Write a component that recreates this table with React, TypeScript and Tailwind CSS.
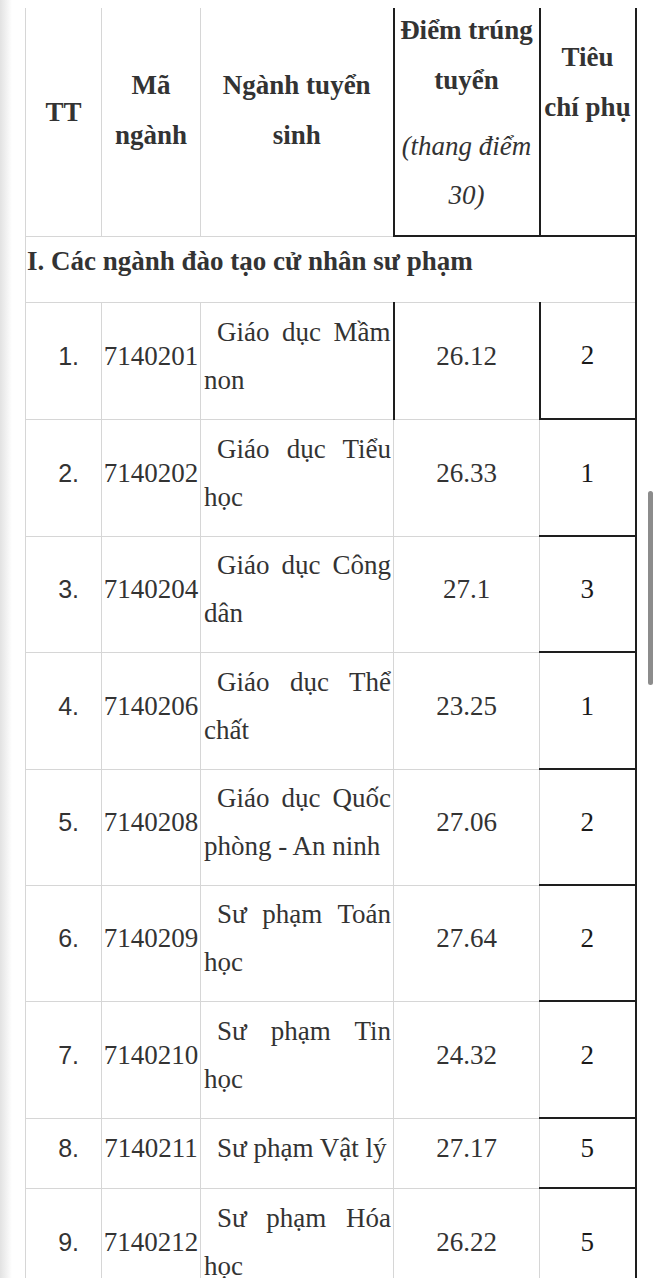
import React from "react";

type Row = {
  tt: string;
  ma: string;
  name: string;
  diem: string;
  tc: string;
  h: string;
  first?: boolean;
};

const rows: Row[] = [
  { tt: "1.", ma: "7140201", name: "Giáo dục Mầm non", diem: "26.12", tc: "2", h: "h-[117px]", first: true },
  { tt: "2.", ma: "7140202", name: "Giáo dục Tiểu học", diem: "26.33", tc: "1", h: "h-[117px]" },
  { tt: "3.", ma: "7140204", name: "Giáo dục Công dân", diem: "27.1", tc: "3", h: "h-[116px]" },
  { tt: "4.", ma: "7140206", name: "Giáo dục Thể chất", diem: "23.25", tc: "1", h: "h-[117px]" },
  { tt: "5.", ma: "7140208", name: "Giáo dục Quốc phòng - An ninh", diem: "27.06", tc: "2", h: "h-[116px]" },
  { tt: "6.", ma: "7140209", name: "Sư phạm Toán học", diem: "27.64", tc: "2", h: "h-[116px]" },
  { tt: "7.", ma: "7140210", name: "Sư phạm Tin học", diem: "24.32", tc: "2", h: "h-[117px]" },
  { tt: "8.", ma: "7140211", name: "Sư phạm Vật lý", diem: "27.17", tc: "5", h: "h-[70px]" },
  { tt: "9.", ma: "7140212", name: "Sư phạm Hóa học", diem: "26.22", tc: "5", h: "h-[117px]" },
];

const serif = "font-['Liberation_Serif','Times_New_Roman',serif]";
const sans = "font-['Liberation_Sans',Arial,sans-serif]";
const gray = "border border-[#d6d6d6]";

export default function App() {
  return (
    <div className={`relative flex h-[1278px] w-[660px] overflow-hidden bg-white ${serif} text-[#333]`}>
      <div className="w-[12px] shrink-0 bg-gradient-to-r from-[#e2e2e2] to-white" />
      <div className="ml-[13px] pt-[8px]">
        <table className="w-[610px] table-fixed border-collapse text-[27px]">
          <colgroup>
            <col className="w-[76px]" />
            <col className="w-[99px]" />
            <col className="w-[193px]" />
            <col className="w-[146px]" />
            <col className="w-[96px]" />
          </colgroup>
          <thead>
            <tr className="h-[228px] font-bold leading-[50px]">
              <th className={`${gray} border-t-0 p-0 align-top`}>
                <div className="pt-[79px] text-center">TT</div>
              </th>
              <th className={`${gray} border-t-0 p-0 align-top`}>
                <div className="pt-[52px] text-center">
                  Mã
                  <br />
                  ngành
                </div>
              </th>
              <th className={`${gray} border-t-0 p-0 align-top`}>
                <div className="pt-[52px] text-center">
                  Ngành tuyển
                  <br />
                  sinh
                </div>
              </th>
              <th className="border-2 border-t-0 border-[#1e1e1e] p-0 align-top">
                <div className="-mt-[3px] text-center">
                  <p>
                    Điểm trúng
                    <br />
                    tuyển
                  </p>
                  <p className="mt-[17px] font-normal italic leading-[49px]">
                    (thang điểm
                    <br />
                    30)
                  </p>
                </div>
              </th>
              <th className="border-2 border-t-0 border-[#1e1e1e] p-0 align-top">
                <div className="pt-[24px] text-center">
                  Tiêu
                  <br />
                  chí phụ
                </div>
              </th>
            </tr>
          </thead>
          <tbody className="leading-[48px]">
            <tr className="h-[66px]">
              <td
                colSpan={5}
                className={`${gray} border-r-2 border-r-[#1e1e1e] pb-[16px] pl-[1px] pt-0 align-middle font-bold`}
              >
                I. Các ngành đào tạo cử nhân sư phạm
              </td>
            </tr>
            {rows.map((r) => (
              <tr key={r.ma} className={r.h}>
                <td className={`${gray} pb-[12px] pr-[22px] pt-[2px] text-right align-middle ${sans} text-[25px]`}>
                  {r.tt}
                </td>
                <td className={`${gray} pb-[12px] pt-[2px] text-center align-middle`}>{r.ma}</td>
                <td
                  className={`${gray} pb-[12px] pl-[3px] pr-[2px] pt-[2px] text-justify indent-[13px] align-middle`}
                >
                  {r.name}
                </td>
                <td
                  className={`${gray} ${
                    r.first ? "border-l-2 border-l-[#1e1e1e]" : ""
                  } pb-[12px] pt-[2px] text-center align-middle`}
                >
                  {r.diem}
                </td>
                <td
                  className={`${gray} ${
                    r.first ? "border-l-2 border-l-[#1e1e1e]" : ""
                  } border-b-2 border-r-2 border-b-[#1e1e1e] border-r-[#1e1e1e] pb-[12px] pt-[2px] text-center align-middle text-[#1a1a1a]`}
                >
                  {r.tc}
                </td>
              </tr>
            ))}
          </tbody>
        </table>
      </div>
      <div className="absolute left-[648px] top-[491px] h-[194px] w-[5px] rounded-full bg-[#8c8c8c]" />
    </div>
  );
}
